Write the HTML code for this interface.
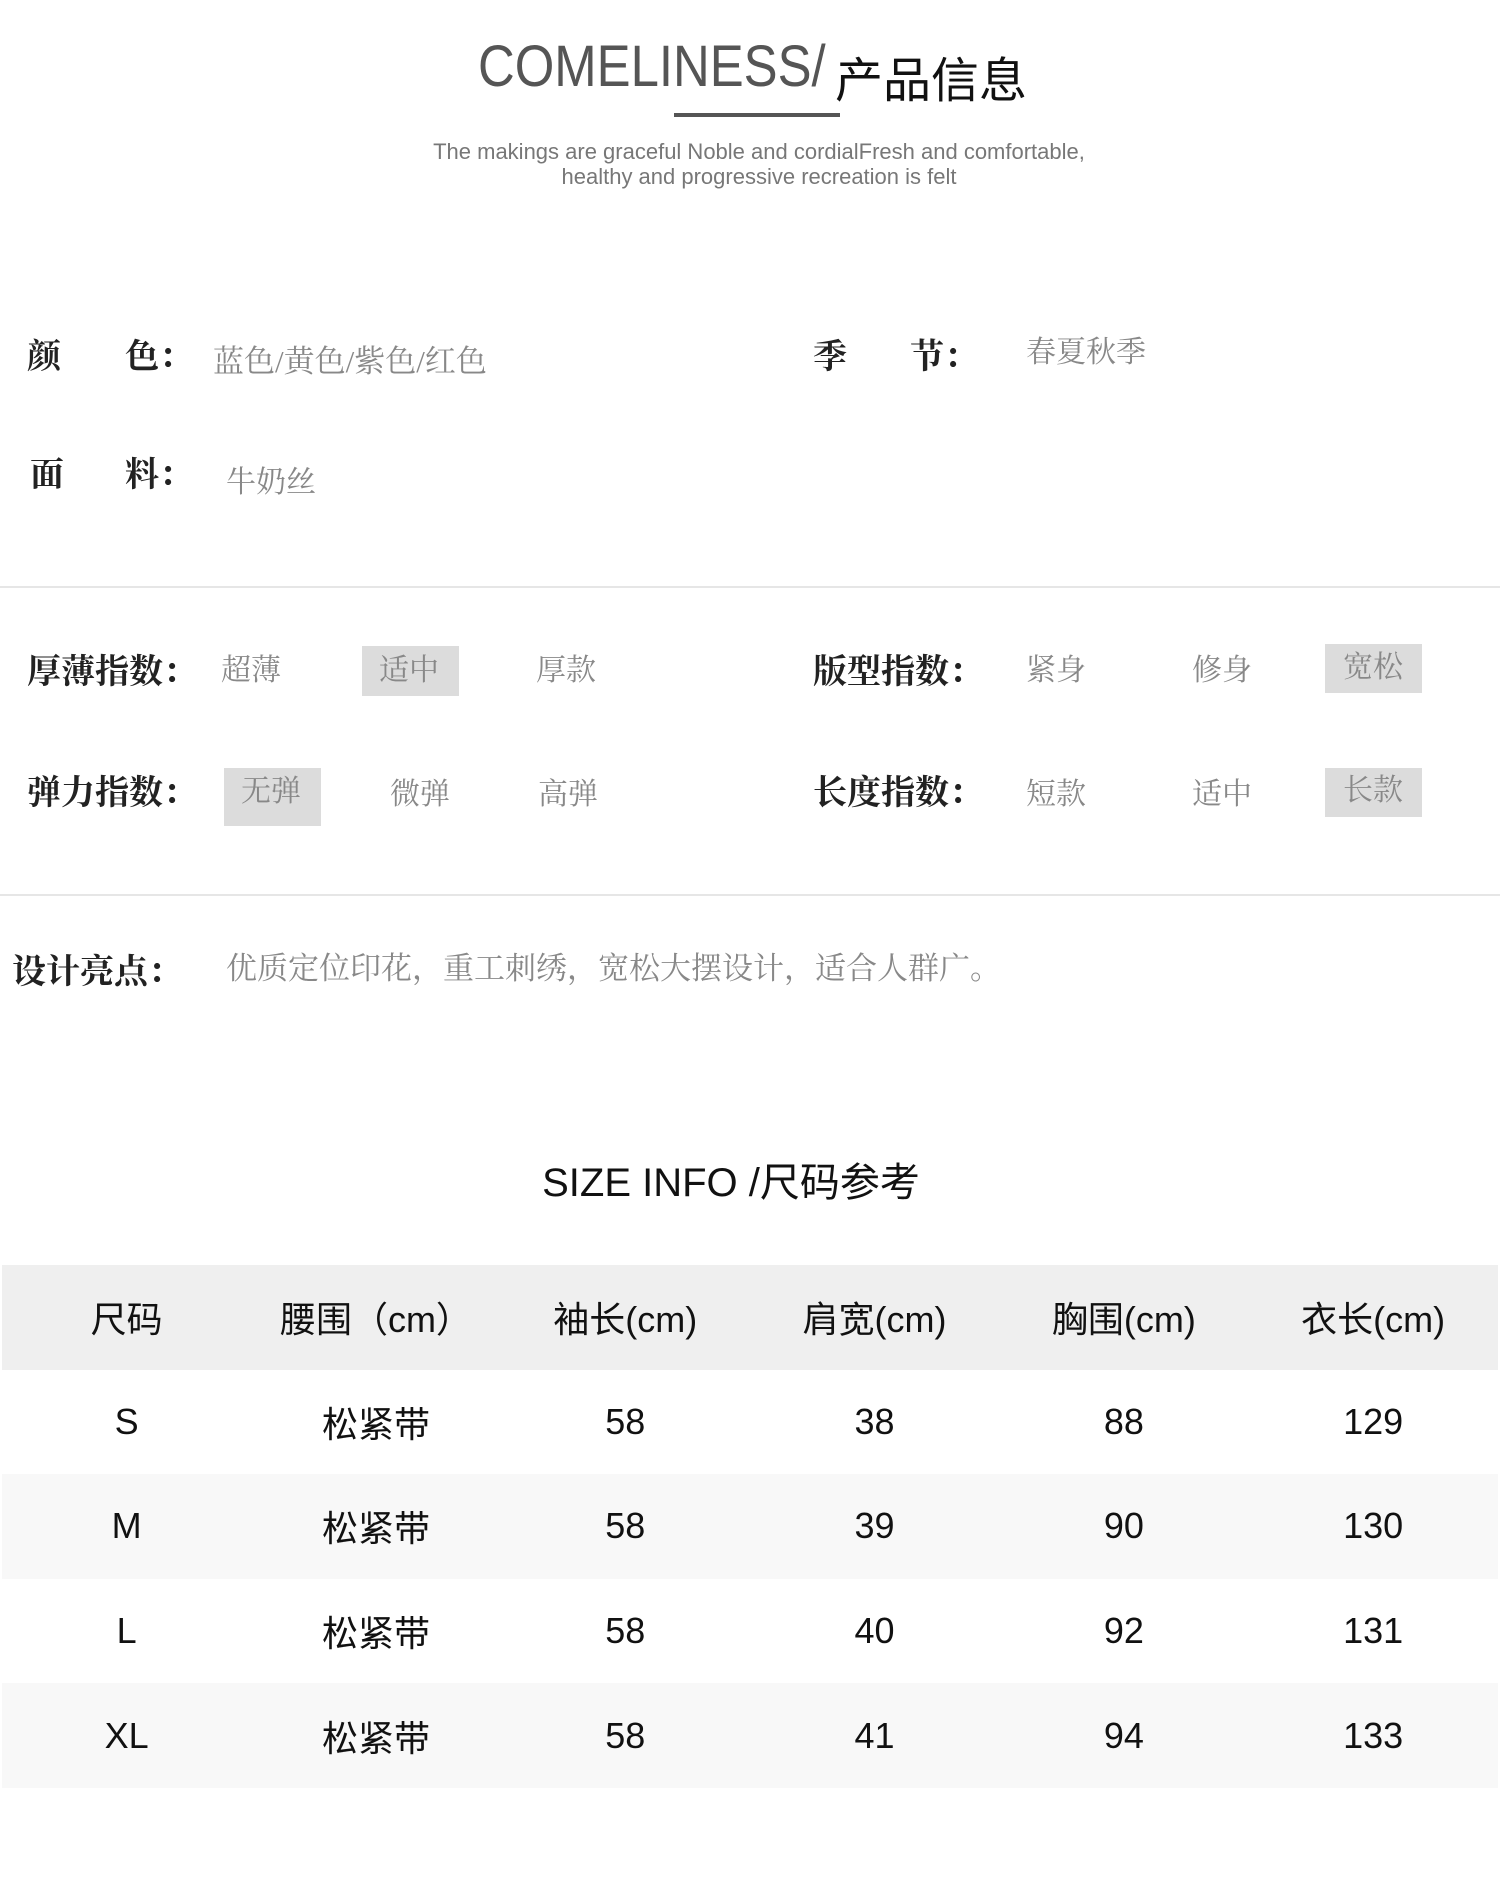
<!DOCTYPE html>
<html><head><meta charset="utf-8"><style>
*{margin:0;padding:0;box-sizing:border-box}
body{width:1500px;height:1897px;background:#fff;position:relative;overflow:hidden;font-family:"Liberation Sans","Noto Sans CJK SC",sans-serif}
.a{position:absolute;white-space:nowrap;line-height:1}
.lab{font-family:"Liberation Serif","Noto Serif CJK SC",serif;font-weight:bold;font-size:34px;color:#222}
.val{font-family:"Liberation Serif","Noto Serif CJK SC",serif;font-size:30px;color:#888}
.box{position:absolute;background:#dcdcdc}
.hr{position:absolute;left:0;width:1500px;height:2px;background:#e6e6e6}
.tbl{position:absolute;left:2px;width:1496px}
.row{height:104.6px;display:flex;align-items:center}
.row div{width:249.3px;text-align:center;font-size:36px;color:#111;font-family:"Liberation Sans","Noto Sans CJK SC",sans-serif}
</style></head><body>
<div class="a" style="left:478px;top:38px;font-size:58px;color:#555;font-family:'Liberation Sans',sans-serif;transform:scaleX(.877);transform-origin:left">COMELINESS/</div>
<div class="a" style="left:835px;top:52px;font-size:48px;color:#111;font-family:'Noto Sans CJK SC',sans-serif">产品信息</div>
<div class="a" style="left:674px;top:113px;width:166px;height:4px;background:#555"></div>
<div class="a" style="left:0;width:1518px;text-align:center;top:139px;font-size:22px;color:#777;font-family:'Liberation Sans',sans-serif;line-height:25px">The makings are graceful Noble and cordialFresh and comfortable,<br>healthy and progressive recreation is felt</div>

<div class="a lab" style="left:27px;top:341px">颜</div>
<div class="a lab" style="left:125px;top:341px">色：</div>
<div class="a val" style="left:213px;top:346px;font-size:31px">蓝色/黄色/紫色/红色</div>
<div class="a lab" style="left:813px;top:341px">季</div>
<div class="a lab" style="left:910px;top:341px">节：</div>
<div class="a val" style="left:1026px;top:338px">春夏秋季</div>
<div class="a lab" style="left:30px;top:459px">面</div>
<div class="a lab" style="left:125px;top:459px">料：</div>
<div class="a val" style="left:226px;top:468px">牛奶丝</div>
<div class="hr" style="top:586px"></div>

<div class="box" style="left:362px;top:646px;width:97px;height:50px"></div>
<div class="box" style="left:1325px;top:644px;width:97px;height:49px"></div>
<div class="box" style="left:224px;top:768px;width:97px;height:58px"></div>
<div class="box" style="left:1325px;top:768px;width:97px;height:49px"></div>

<div class="a lab" style="left:27px;top:656px">厚薄指数：</div>
<div class="a val" style="left:221px;top:656px">超薄</div>
<div class="a val" style="left:379px;top:656px">适中</div>
<div class="a val" style="left:536px;top:656px">厚款</div>
<div class="a lab" style="left:813px;top:656px">版型指数：</div>
<div class="a val" style="left:1026px;top:656px">紧身</div>
<div class="a val" style="left:1192px;top:656px">修身</div>
<div class="a val" style="left:1343px;top:653px">宽松</div>

<div class="a lab" style="left:27px;top:777px">弹力指数：</div>
<div class="a val" style="left:241px;top:777px">无弹</div>
<div class="a val" style="left:390px;top:780px">微弹</div>
<div class="a val" style="left:538px;top:780px">高弹</div>
<div class="a lab" style="left:813px;top:777px">长度指数：</div>
<div class="a val" style="left:1026px;top:780px">短款</div>
<div class="a val" style="left:1192px;top:780px">适中</div>
<div class="a val" style="left:1343px;top:776px">长款</div>
<div class="hr" style="top:894px"></div>

<div class="a lab" style="left:12px;top:956px">设计亮点：</div>
<div class="a val" style="left:226px;top:953px;font-size:31px">优质定位印花，重工刺绣，宽松大摆设计，适合人群广。</div>

<div class="a" style="left:0;width:1462px;text-align:center;top:1163px;font-size:40px;color:#111;font-family:'Liberation Sans','Noto Sans CJK SC',sans-serif">SIZE INFO /尺码参考</div>

<div class="tbl" style="top:1265px">
<div class="row" style="background:#efefef"><div>尺码</div><div>腰围（cm）</div><div>袖长(cm)</div><div>肩宽(cm)</div><div>胸围(cm)</div><div>衣长(cm)</div></div>
<div class="row"><div>S</div><div>松紧带</div><div>58</div><div>38</div><div>88</div><div>129</div></div>
<div class="row" style="background:#f8f8f8"><div>M</div><div>松紧带</div><div>58</div><div>39</div><div>90</div><div>130</div></div>
<div class="row"><div>L</div><div>松紧带</div><div>58</div><div>40</div><div>92</div><div>131</div></div>
<div class="row" style="background:#f8f8f8"><div>XL</div><div>松紧带</div><div>58</div><div>41</div><div>94</div><div>133</div></div>
</div>
</body></html>
